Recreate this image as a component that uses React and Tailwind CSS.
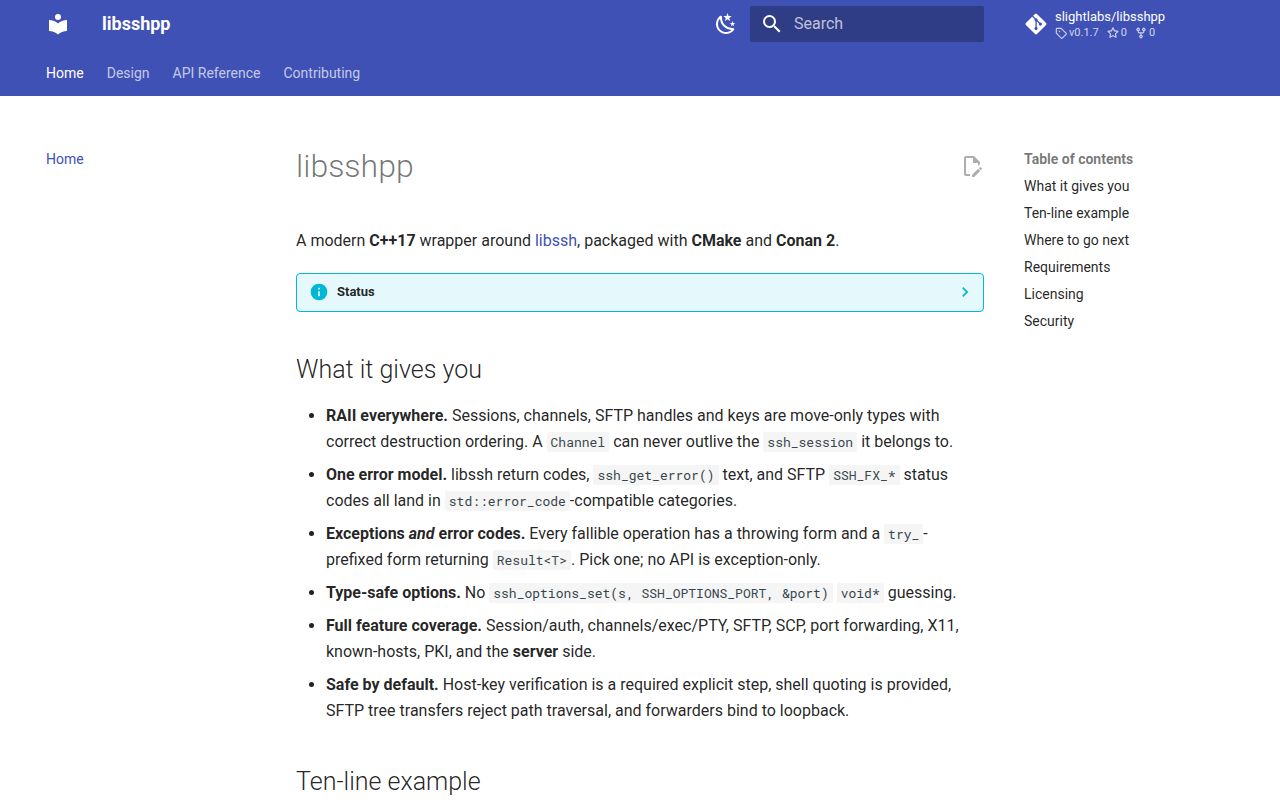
import React, { useState } from 'react';
import { FaGitAlt } from 'react-icons/fa';

// --- ICONS ---
const ICONS = {
  library: 'M12 8a3 3 0 0 0 3-3 3 3 0 0 0-3-3 3 3 0 0 0-3 3 3 3 0 0 0 3 3m0 3.54C9.64 9.35 6.5 8 3 8v11c3.5 0 6.64 1.35 9 3.54 2.36-2.19 5.5-3.54 9-3.54V8c-3.5 0-6.64 1.35-9 3.54Z',
  night: 'm17.75 4.09-2.53 1.94.91 3.06-2.63-1.81-2.63 1.81.91-3.06-2.53-1.94L12.44 4l1.06-3 1.06 3 3.19.09m3.5 6.91-1.64 1.25.59 1.98-1.7-1.17-1.7 1.17.59-1.98L15.75 11l2.06-.05L18.5 9l.69 1.95 2.06.05m-2.28 4.95c.83-.08 1.72 1.1 1.19 1.85-.32.45-.66.87-1.08 1.27C15.17 23 8.84 23 4.94 19.07c-3.91-3.9-3.91-10.24 0-14.14.4-.4.82-.76 1.27-1.08.75-.53 1.93.36 1.85 1.19-.27 2.86.69 5.83 2.89 8.02a9.96 9.96 0 0 0 8.02 2.89m-1.64 2.02a12.08 12.08 0 0 1-7.8-3.47c-2.17-2.19-3.33-5-3.49-7.82-2.81 3.14-2.7 7.96.31 10.98 3.02 3.01 7.84 3.12 10.98.31Z',
  search: 'M9.5 3A6.5 6.5 0 0 1 16 9.5c0 1.61-.59 3.09-1.56 4.23l.27.27h.79l5 5-1.5 1.5-5-5v-.79l-.27-.27A6.516 6.516 0 0 1 9.5 16 6.5 6.5 0 0 1 3 9.5 6.5 6.5 0 0 1 9.5 3m0 2C7 5 5 7 5 9.5S7 14 9.5 14 14 12 14 9.5 12 5 9.5 5Z',
  edit: 'M10 20H6V4h7v5h5v3.1l2-2V8l-6-6H6c-1.1 0-2 .9-2 2v16c0 1.1.9 2 2 2h4zm10.2-7c.1 0 .3.1.4.2l1.3 1.3c.2.2.2.6 0 .8l-1 1-2.1-2.1 1-1c.1-.1.2-.2.4-.2m0 3.9L14.1 23H12v-2.1l6.1-6.1z',
  info: 'M13 9h-2V7h2m0 10h-2v-6h2m-1-9A10 10 0 0 0 2 12a10 10 0 0 0 10 10 10 10 0 0 0 10-10A10 10 0 0 0 12 2',
  chevron: 'M8.59 16.58 13.17 12 8.59 7.41 10 6l6 6-6 6z',
  tag: 'M1 7.775V2.75C1 1.784 1.784 1 2.75 1h5.025c.464 0 .91.184 1.238.513l6.25 6.25a1.75 1.75 0 0 1 0 2.474l-5.026 5.026a1.75 1.75 0 0 1-2.474 0l-6.25-6.25A1.75 1.75 0 0 1 1 7.775m1.5 0c0 .066.026.13.073.177l6.25 6.25a.25.25 0 0 0 .354 0l5.025-5.025a.25.25 0 0 0 0-.354l-6.25-6.25a.25.25 0 0 0-.177-.073H2.75a.25.25 0 0 0-.25.25ZM6 5a1 1 0 1 1 0 2 1 1 0 0 1 0-2',
  star: 'M8 .25a.75.75 0 0 1 .673.418l1.882 3.815 4.21.612a.75.75 0 0 1 .416 1.279l-3.046 2.97.719 4.192a.751.751 0 0 1-1.088.791L8 12.347l-3.766 1.98a.75.75 0 0 1-1.088-.79l.72-4.194L.818 6.374a.75.75 0 0 1 .416-1.28l4.21-.611L7.327.668A.75.75 0 0 1 8 .25m0 2.445L6.615 5.5a.75.75 0 0 1-.564.41l-3.097.45 2.24 2.184a.75.75 0 0 1 .216.664l-.528 3.084 2.769-1.456a.75.75 0 0 1 .698 0l2.77 1.456-.53-3.084a.75.75 0 0 1 .216-.664l2.24-2.183-3.096-.45a.75.75 0 0 1-.564-.41z',
  fork: 'M5 5.372v.878c0 .414.336.75.75.75h4.5a.75.75 0 0 0 .75-.75v-.878a2.25 2.25 0 1 1 1.5 0v.878a2.25 2.25 0 0 1-2.25 2.25h-1.5v2.128a2.251 2.251 0 1 1-1.5 0V8.5h-1.5A2.25 2.25 0 0 1 3.5 6.25v-.878a2.25 2.25 0 1 1 1.5 0M5 3.25a.75.75 0 1 0-1.5 0 .75.75 0 0 0 1.5 0m6.75.75a.75.75 0 1 0 0-1.5.75.75 0 0 0 0 1.5m-3 8.75a.75.75 0 1 0-1.5 0 .75.75 0 0 0 1.5 0',
};

const Icon = ({ name, box = 24, className }) => (
  <svg viewBox={`0 0 ${box} ${box}`} fill="currentColor" aria-hidden="true" className={className}>
    <path d={ICONS[name]} />
  </svg>
);

// --- NAVIGATION DATA ---
const tabs = ['Home', 'Design', 'API Reference', 'Contributing'];
const toc = ['What it gives you', 'Ten-line example', 'Where to go next', 'Requirements', 'Licensing', 'Security'];
const facts = [
  { icon: 'tag', text: 'v0.1.7' },
  { icon: 'star', text: '0' },
  { icon: 'fork', text: '0' },
];

const slug = (text) => text.toLowerCase().replace(/ /g, '-');

const Code = ({ children }) => (
  <code className="rounded-xs bg-[#f5f5f5] px-1 py-px font-['Roboto_Mono','Liberation_Mono',monospace] text-[13px] leading-5 text-[#36464e]">
    {children}
  </code>
);

const Heading = ({ children }) => (
  <h2 id={slug(children)} className="mt-10 mb-4 text-[25px] leading-[35px] font-light">
    {children}
  </h2>
);

const Header = () => {
  const [query, setQuery] = useState('');

  return (
    <header className="bg-[#4051b5] text-white">
      <div className="mx-auto flex h-12 max-w-[1220px] items-center px-4">
        <a href="#" aria-label="libsshpp">
          <Icon name="library" className="size-6" />
        </a>
        <span className="ml-8 flex-1 text-lg font-bold">libsshpp</span>
        <button type="button" aria-label="Switch to dark mode" className="mr-3">
          <Icon name="night" className="size-6" />
        </button>
        <label className="flex h-9 w-[234px] items-center rounded-xs bg-black/26 pl-[10px]">
          <Icon name="search" className="size-6 shrink-0" />
          <input
            type="text"
            aria-label="Search"
            placeholder="Search"
            value={query}
            onChange={(e) => setQuery(e.target.value)}
            className="ml-[10px] w-full min-w-0 bg-transparent text-base outline-none placeholder:text-white/70"
          />
        </label>
        <a href="#repo" className="ml-10 flex w-[210px] items-center gap-[7px]">
          <FaGitAlt className="size-6" />
          <span className="flex flex-col pt-0.5">
            <span className="text-[13px] leading-4">slightlabs/libsshpp</span>
            <span className="flex gap-2 text-[11px] leading-4 text-white/75">
              {facts.map((fact) => (
                <span key={fact.icon} className="flex items-center gap-0.5">
                  <Icon name={fact.icon} box={16} className="size-3" />
                  {fact.text}
                </span>
              ))}
            </span>
          </span>
        </a>
      </div>
      <nav className="mx-auto flex h-12 max-w-[1220px] gap-[23px] px-4 pt-4 text-sm leading-[18px]">
        {tabs.map((tab, i) => (
          <a key={tab} href={`#${slug(tab)}`} className={i === 0 ? 'text-white' : 'text-white/70'}>
            {tab}
          </a>
        ))}
      </nav>
    </header>
  );
};

const App = () => {
  return (
    <div className="min-h-screen bg-white font-[Roboto,sans-serif] text-black/87">
      <Header />

      <div className="mx-auto flex max-w-[1220px] px-4 pt-[50px]">
        {/* Left navigation */}
        <nav className="w-[250px] shrink-0 pt-1 text-sm leading-[18px]">
          <a href="#home" className="text-[#4051b5]">Home</a>
        </nav>

        {/* Article */}
        <main className="min-w-0 flex-1 text-base leading-[26px]">
          <div className="mb-[42px] flex items-center justify-between">
            <h1 className="text-[32px] leading-10 font-light text-black/54">libsshpp</h1>
            <a href="#edit" aria-label="Edit this page" className="text-black/32">
              <Icon name="edit" className="size-6" />
            </a>
          </div>

          <p>
            A modern <strong>C++17</strong> wrapper around <a href="#libssh" className="text-[#4051b5]">libssh</a>,
            packaged with <strong>CMake</strong> and <strong>Conan 2</strong>.
          </p>

          <details className="mt-[19px] rounded-sm border border-[#00b8d4] bg-[#e5f8fb]">
            <summary className="flex h-[37px] items-center px-3 pb-0.5 text-[13px] leading-5 font-bold">
              <Icon name="info" className="mr-2 size-5 text-[#00b8d4]" />
              <span className="flex-1">Status</span>
              <Icon name="chevron" className="-mr-1 size-5 text-[#00b8d4]" />
            </summary>
          </details>

          <Heading>What it gives you</Heading>

          <ul className="ml-[30px] list-disc space-y-[7px]">
            <li>
              <strong>RAII everywhere.</strong> Sessions, channels, SFTP handles and keys are move-only types with
              correct destruction ordering. A <Code>Channel</Code> can never outlive the <Code>ssh_session</Code> it
              belongs to.
            </li>
            <li>
              <strong>One error model.</strong> libssh return codes, <Code>ssh_get_error()</Code> text, and
              SFTP <Code>SSH_FX_*</Code> status codes all land in <Code>std::error_code</Code>-compatible categories.
            </li>
            <li>
              <strong>Exceptions <em>and</em> error codes.</strong> Every fallible operation has a throwing form and
              a <Code>try_</Code>-prefixed form returning <Code>Result&lt;T&gt;</Code>. Pick one; no API is
              exception-only.
            </li>
            <li>
              <strong>Type-safe options.</strong> No <Code>ssh_options_set(s, SSH_OPTIONS_PORT, &amp;port)</Code>{' '}
              <Code>void*</Code> guessing.
            </li>
            <li>
              <strong>Full feature coverage.</strong> Session/auth, channels/exec/PTY, SFTP, SCP, port forwarding,
              X11, known-hosts, PKI, and the <strong>server</strong> side.
            </li>
            <li>
              <strong>Safe by default.</strong> Host-key verification is a required explicit step, shell quoting is
              provided, SFTP tree transfers reject path traversal, and forwarders bind to loopback.
            </li>
          </ul>

          <Heading>Ten-line example</Heading>
        </main>

        {/* Table of contents */}
        <nav aria-labelledby="toc-title" className="ml-10 w-[210px] shrink-0 pt-1 text-sm leading-[18px]">
          <h2 id="toc-title" className="font-bold text-black/54">Table of contents</h2>
          <ul>
            {toc.map((item) => (
              <li key={item} className="mt-[9px]">
                <a href={`#${slug(item)}`}>{item}</a>
              </li>
            ))}
          </ul>
        </nav>
      </div>
    </div>
  );
};

export default App;
